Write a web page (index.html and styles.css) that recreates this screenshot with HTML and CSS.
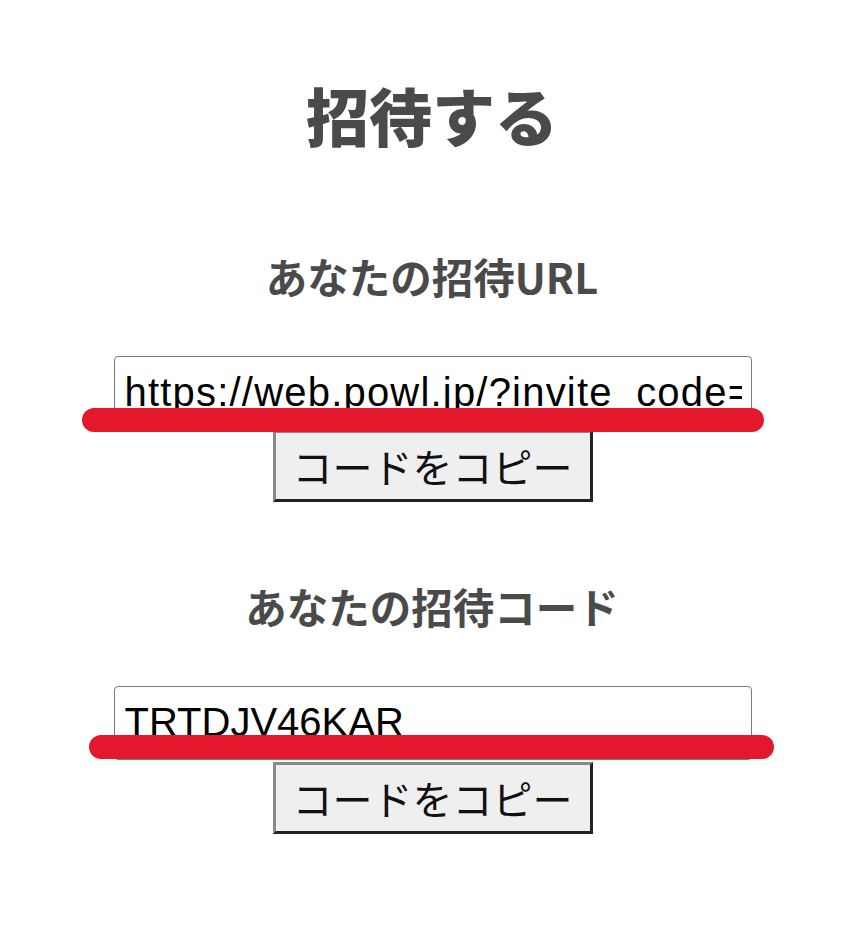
FILE: index.html
```html
<!DOCTYPE html>
<html lang="ja">
<head>
<meta charset="utf-8">
<title>招待する</title>
<link rel="stylesheet" href="styles.css">
</head>
<body>
<main class="page">
  <h1 class="title">招待する</h1>

  <section class="invite invite-url">
    <h2 class="label">あなたの招待URL</h2>
    <div class="field">
      <input class="code-input url-input" type="text" value="https://web.powl.jp/?invite_code=TRTDJV46KAR" readonly>
      <button class="copy-btn" type="button">コードをコピー</button>
      <span class="redact redact-1"></span>
    </div>
  </section>

  <section class="invite invite-code">
    <h2 class="label">あなたの招待コード</h2>
    <div class="field">
      <input class="code-input" type="text" value="TRTDJV46KAR" readonly>
      <button class="copy-btn copy-btn-code" type="button">コードをコピー</button>
      <span class="redact redact-2"></span>
    </div>
  </section>
</main>
</body>
</html>
```

FILE: styles.css
```css
html, body {
  margin: 0;
  padding: 0;
  background: #ffffff;
}

.page {
  display: flex;
  flex-direction: column;
  align-items: center;
  padding-top: 82px;
  font-family: "Noto Sans CJK JP", "Noto Sans", sans-serif;
}

.title {
  margin: 0;
  font-size: 63px;
  line-height: 63px;
  font-weight: 900;
  color: #4a4a4a;
}

.invite {
  display: flex;
  flex-direction: column;
  align-items: center;
}

.invite-url {
  margin-top: 111px;
}

.invite-code {
  margin-top: 84px;
}

.label {
  margin: 0;
  font-size: 41.5px;
  line-height: 40px;
  font-weight: 700;
  color: #4a4a4a;
}

.field {
  position: relative;
  display: flex;
  flex-direction: column;
  align-items: center;
  margin-top: 60px;
  width: 864px;
}

.code-input {
  box-sizing: border-box;
  width: 638px;
  height: 74px;
  margin: 0 0 0 1px;
  padding: 12px 9px 14px 10px;
  border: 1px solid #7a7a7a;
  border-radius: 4px;
  background: #ffffff;
  font-family: "Liberation Sans", Arial, sans-serif;
  font-size: 40px;
  line-height: 46px;
  color: #000000;
  outline: none;
}

.url-input {
  letter-spacing: 1.2px;
}

.copy-btn {
  box-sizing: border-box;
  width: 320px;
  height: 72px;
  margin: 0 0 0 1px;
  padding: 3px 17px;
  border-style: solid;
  border-width: 3px;
  border-color: #8a8a8a #222222 #222222 #8a8a8a;
  border-radius: 0;
  background: #efefef;
  font-family: "Noto Sans CJK JP", sans-serif;
  font-size: 40px;
  line-height: 58px;
  font-weight: 400;
  color: #111111;
}

.copy-btn-code {
  margin-top: 2px;
}

.redact {
  position: absolute;
  height: 24px;
  border-radius: 12px;
  background: #e3182d;
}

.redact-1 {
  left: 82px;
  top: 52px;
  width: 682px;
}

.redact-2 {
  left: 89px;
  top: 49px;
  width: 685px;
}
```
